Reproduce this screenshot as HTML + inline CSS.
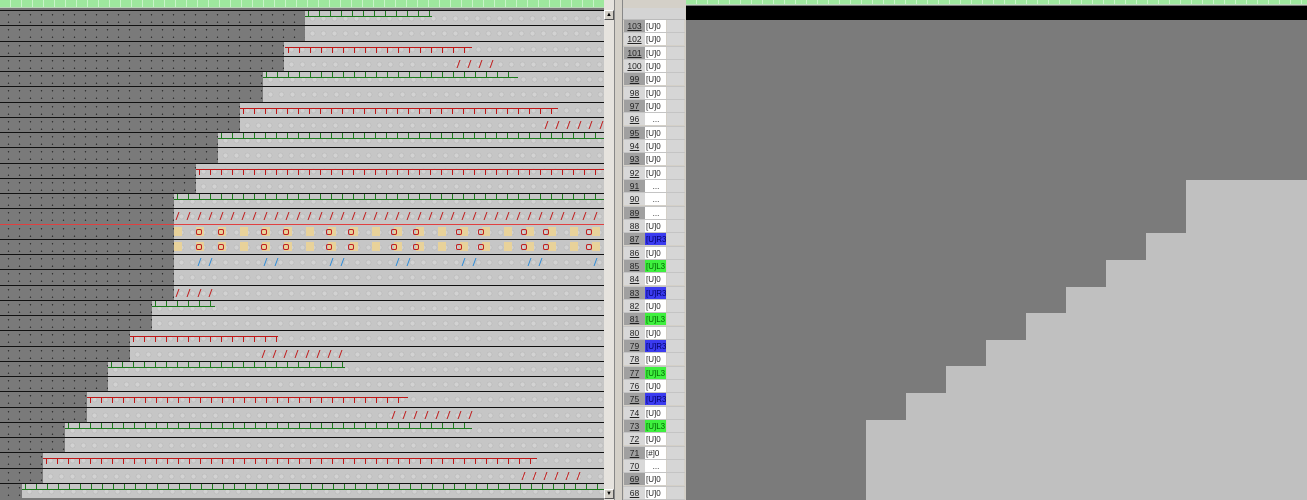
<!DOCTYPE html>
<html><head><meta charset="utf-8">
<style>
*{margin:0;padding:0;box-sizing:border-box}
body{width:1307px;height:500px;overflow:hidden;background:#d4d0c8;position:relative;font-family:"Liberation Sans",sans-serif}
#left{position:absolute;left:0;top:0;width:604px;height:500px;background:#7a7a7a;overflow:hidden}
.ruler{position:absolute;top:0;height:8px;background:repeating-linear-gradient(90deg,#9ee89e 0 10px,#c8f5c8 10px 11px);border-bottom:1px solid #b8d8b8}
.row{position:absolute;left:0;width:604px;height:15.25px;border-top:1.5px solid #111;
 background:radial-gradient(circle,#333 0.6px,transparent 0.9px) 3px 0px/11px 7.5px #7a7a7a}
.lt{position:absolute;top:0;bottom:0;right:0;background:radial-gradient(circle,#d2d2d2 2px,#b4b4b4 2.5px,transparent 3px) 2px 1px/11px 13px,#c6c6c6}
.ln{position:absolute;height:1px}
.tk{position:absolute;width:1px;height:6px}
#sb{position:absolute;left:604px;top:0;width:10px;height:500px;background:#e6e3de}
.btn{position:absolute;left:604px;width:10px;height:10px;background:#d4d0c8;border:1px solid;border-color:#fff #555 #555 #fff;font-size:6px;text-align:center;line-height:8px}
#sep{position:absolute;left:614px;top:0;width:9px;height:500px;background:#d4d0c8;border-left:1px solid #888;border-right:1px solid #888}
#tbl{position:absolute;left:623px;top:0;width:62px;height:500px;background:#d4d0c8}
.tr{position:absolute;left:0;width:62px;height:13.33px;font-size:8.5px;line-height:13px;border-bottom:1px solid #c4c4c4}
.n{position:absolute;left:1px;width:21px;height:12px;text-align:center;text-decoration:underline;color:#222}
.v{position:absolute;left:22px;width:21px;height:12px;background:#fff;color:#222;padding-left:1px;white-space:nowrap;overflow:hidden;font-size:8px}
.e{position:absolute;left:44px;width:17px;height:12px;background:#d6d6d6}
.b{background:#3b3bf0!important;color:#006!important}
.g{background:#3ef03e!important;color:#060!important}
#right{position:absolute;left:686px;top:0;width:621px;height:500px;background:#7b7b7b;overflow:hidden}
.st{position:absolute;background:#c0c0c0;right:0;bottom:0}
</style></head><body>
<div id="left">
<div class="ruler" style="left:0;width:604px"></div>
<div id="rows"></div>
</div>
<div id="sb"></div>
<div class="btn" style="top:10px">▲</div>
<div class="btn" style="top:489px">▼</div>
<div id="sep"></div>
<div id="tbl">
<div style="position:absolute;left:0;top:8px;width:62px;height:12px;background:#d4d4d4;border-bottom:1px solid #bbb"></div>
<div class="tr" style="top:20px"><span class="n" style="background:#a0a0a0">103</span><span class="v">[U]0</span><span class="e"></span></div>
<div class="tr" style="top:33.3px"><span class="n" style="background:#d8d8d8">102</span><span class="v">[U]0</span><span class="e"></span></div>
<div class="tr" style="top:46.7px"><span class="n" style="background:#a0a0a0">101</span><span class="v">[U]0</span><span class="e"></span></div>
<div class="tr" style="top:60px"><span class="n" style="background:#d8d8d8">100</span><span class="v">[U]0</span><span class="e"></span></div>
<div class="tr" style="top:73.3px"><span class="n" style="background:#a0a0a0">99</span><span class="v">[U]0</span><span class="e"></span></div>
<div class="tr" style="top:86.7px"><span class="n" style="background:#d8d8d8">98</span><span class="v">[U]0</span><span class="e"></span></div>
<div class="tr" style="top:100px"><span class="n" style="background:#a0a0a0">97</span><span class="v">[U]0</span><span class="e"></span></div>
<div class="tr" style="top:113.3px"><span class="n" style="background:#d8d8d8">96</span><span class="v" style="text-align:center">...</span><span class="e"></span></div>
<div class="tr" style="top:126.7px"><span class="n" style="background:#a0a0a0">95</span><span class="v">[U]0</span><span class="e"></span></div>
<div class="tr" style="top:140px"><span class="n" style="background:#d8d8d8">94</span><span class="v">[U]0</span><span class="e"></span></div>
<div class="tr" style="top:153.3px"><span class="n" style="background:#a0a0a0">93</span><span class="v">[U]0</span><span class="e"></span></div>
<div class="tr" style="top:166.7px"><span class="n" style="background:#d8d8d8">92</span><span class="v">[U]0</span><span class="e"></span></div>
<div class="tr" style="top:180px"><span class="n" style="background:#a0a0a0">91</span><span class="v" style="text-align:center">...</span><span class="e"></span></div>
<div class="tr" style="top:193.3px"><span class="n" style="background:#d8d8d8">90</span><span class="v" style="text-align:center">...</span><span class="e"></span></div>
<div class="tr" style="top:206.7px"><span class="n" style="background:#a0a0a0">89</span><span class="v" style="text-align:center">...</span><span class="e"></span></div>
<div class="tr" style="top:220px"><span class="n" style="background:#d8d8d8">88</span><span class="v">[U]0</span><span class="e"></span></div>
<div class="tr" style="top:233.3px"><span class="n" style="background:#a0a0a0">87</span><span class="v b">[U]R3</span><span class="e"></span></div>
<div class="tr" style="top:246.7px"><span class="n" style="background:#d8d8d8">86</span><span class="v">[U]0</span><span class="e"></span></div>
<div class="tr" style="top:260px"><span class="n" style="background:#a0a0a0">85</span><span class="v g">[U]L3</span><span class="e"></span></div>
<div class="tr" style="top:273.3px"><span class="n" style="background:#d8d8d8">84</span><span class="v">[U]0</span><span class="e"></span></div>
<div class="tr" style="top:286.7px"><span class="n" style="background:#a0a0a0">83</span><span class="v b">[U]R3</span><span class="e"></span></div>
<div class="tr" style="top:300px"><span class="n" style="background:#d8d8d8">82</span><span class="v">[U]0</span><span class="e"></span></div>
<div class="tr" style="top:313.3px"><span class="n" style="background:#a0a0a0">81</span><span class="v g">[U]L3</span><span class="e"></span></div>
<div class="tr" style="top:326.7px"><span class="n" style="background:#d8d8d8">80</span><span class="v">[U]0</span><span class="e"></span></div>
<div class="tr" style="top:340px"><span class="n" style="background:#a0a0a0">79</span><span class="v b">[U]R3</span><span class="e"></span></div>
<div class="tr" style="top:353.3px"><span class="n" style="background:#d8d8d8">78</span><span class="v">[U]0</span><span class="e"></span></div>
<div class="tr" style="top:366.7px"><span class="n" style="background:#a0a0a0">77</span><span class="v g">[U]L3</span><span class="e"></span></div>
<div class="tr" style="top:380px"><span class="n" style="background:#d8d8d8">76</span><span class="v">[U]0</span><span class="e"></span></div>
<div class="tr" style="top:393.3px"><span class="n" style="background:#a0a0a0">75</span><span class="v b">[U]R3</span><span class="e"></span></div>
<div class="tr" style="top:406.7px"><span class="n" style="background:#d8d8d8">74</span><span class="v">[U]0</span><span class="e"></span></div>
<div class="tr" style="top:420px"><span class="n" style="background:#a0a0a0">73</span><span class="v g">[U]L3</span><span class="e"></span></div>
<div class="tr" style="top:433.3px"><span class="n" style="background:#d8d8d8">72</span><span class="v">[U]0</span><span class="e"></span></div>
<div class="tr" style="top:446.7px"><span class="n" style="background:#a0a0a0">71</span><span class="v">[#]0</span><span class="e"></span></div>
<div class="tr" style="top:460px"><span class="n" style="background:#d8d8d8">70</span><span class="v" style="text-align:center">...</span><span class="e"></span></div>
<div class="tr" style="top:473.3px"><span class="n" style="background:#a0a0a0">69</span><span class="v">[U]0</span><span class="e"></span></div>
<div class="tr" style="top:486.7px"><span class="n" style="background:#d8d8d8">68</span><span class="v">[U]0</span><span class="e"></span></div>
</div>
<div id="right">
<div class="ruler" style="left:0;width:621px;height:5px"></div>
<div style="position:absolute;left:0;top:6px;width:621px;height:14px;background:#000"></div>
<div class="st" style="left:500px;top:180px"></div>
<div class="st" style="left:460px;top:233px"></div>
<div class="st" style="left:420px;top:260px"></div>
<div class="st" style="left:380px;top:287px"></div>
<div class="st" style="left:340px;top:313px"></div>
<div class="st" style="left:300px;top:340px"></div>
<div class="st" style="left:260px;top:366px"></div>
<div class="st" style="left:220px;top:393px"></div>
<div class="st" style="left:180px;top:420px"></div>
</div>
<script>
var bnd=[305,305,284,284,263,263,240,240,218,218,196,196,174,174,174,174,174,174,174,152,152,130,130,108,108,87,87,65,65,43,43,22];
var sp={0:['g',305,432],2:['r',285,472],3:['m',455,500],4:['g',263,518],6:['r',240,558],7:['m',543,604],8:['g',218,604],10:['r',196,604],12:['g',174,604],13:['m',174,604],16:['bl',174,604],18:['m',174,215],19:['g',152,215],21:['r',130,278],22:['m',260,345],23:['g',108,345],25:['r',87,408],26:['m',390,472],27:['g',65,472],29:['r',43,537],30:['m',520,580],31:['g',22,604]};
var h='';
for(var i=0;i<32;i++){
 var y=10+i*15.25;
 h+='<div class="row" style="top:'+y+'px"><div class="lt" style="left:'+bnd[i]+'px"></div>';
 var s=sp[i];
 if(s){
  var t=s[0],a=s[1],b=s[2];
  if(t=='g'||t=='r'){
   var c=t=='g'?'#1d7a1d':'#c01818';
   h+='<div class="ln" style="background:'+c+';left:'+a+'px;width:'+(b-a)+'px;top:5px"></div>';
   for(var x=a+3;x<b;x+=11)h+='<div class="tk" style="background:'+c+';left:'+x+'px;top:'+(t=='g'?0:5)+'px"></div>';
  } else {
   var c2=t=='m'?'#c01818':'#2a8ad8';
   for(var x=a+3;x<b;x+=11){ if(t=='bl'&&(x/11|0)%6>1)continue; h+='<div class="tk" style="background:'+c2+';left:'+x+'px;top:3px;height:8px;transform:skewX(-20deg)"></div>';}
  }
 }
 if(i==14||i==15){h+='<div style="position:absolute;left:174px;right:0;top:2px;height:9px;background:repeating-linear-gradient(90deg,#e8d29a 0 8px,transparent 8px 22px)"></div>';
  for(var x=196;x<604;x+=65){h+='<div style="position:absolute;left:'+x+'px;top:4px;width:6px;height:6px;border:1px solid #c02020;border-radius:2px"></div><div style="position:absolute;left:'+(x+22)+'px;top:4px;width:6px;height:6px;border:1px solid #c02020;border-radius:2px"></div>';}}
 if(i==14)h+='<div style="position:absolute;left:0;right:0;top:-1px;height:1px;background:#e04040"></div>';
 h+='</div>';
}
document.getElementById('rows').innerHTML=h;
</script>
</body></html>
